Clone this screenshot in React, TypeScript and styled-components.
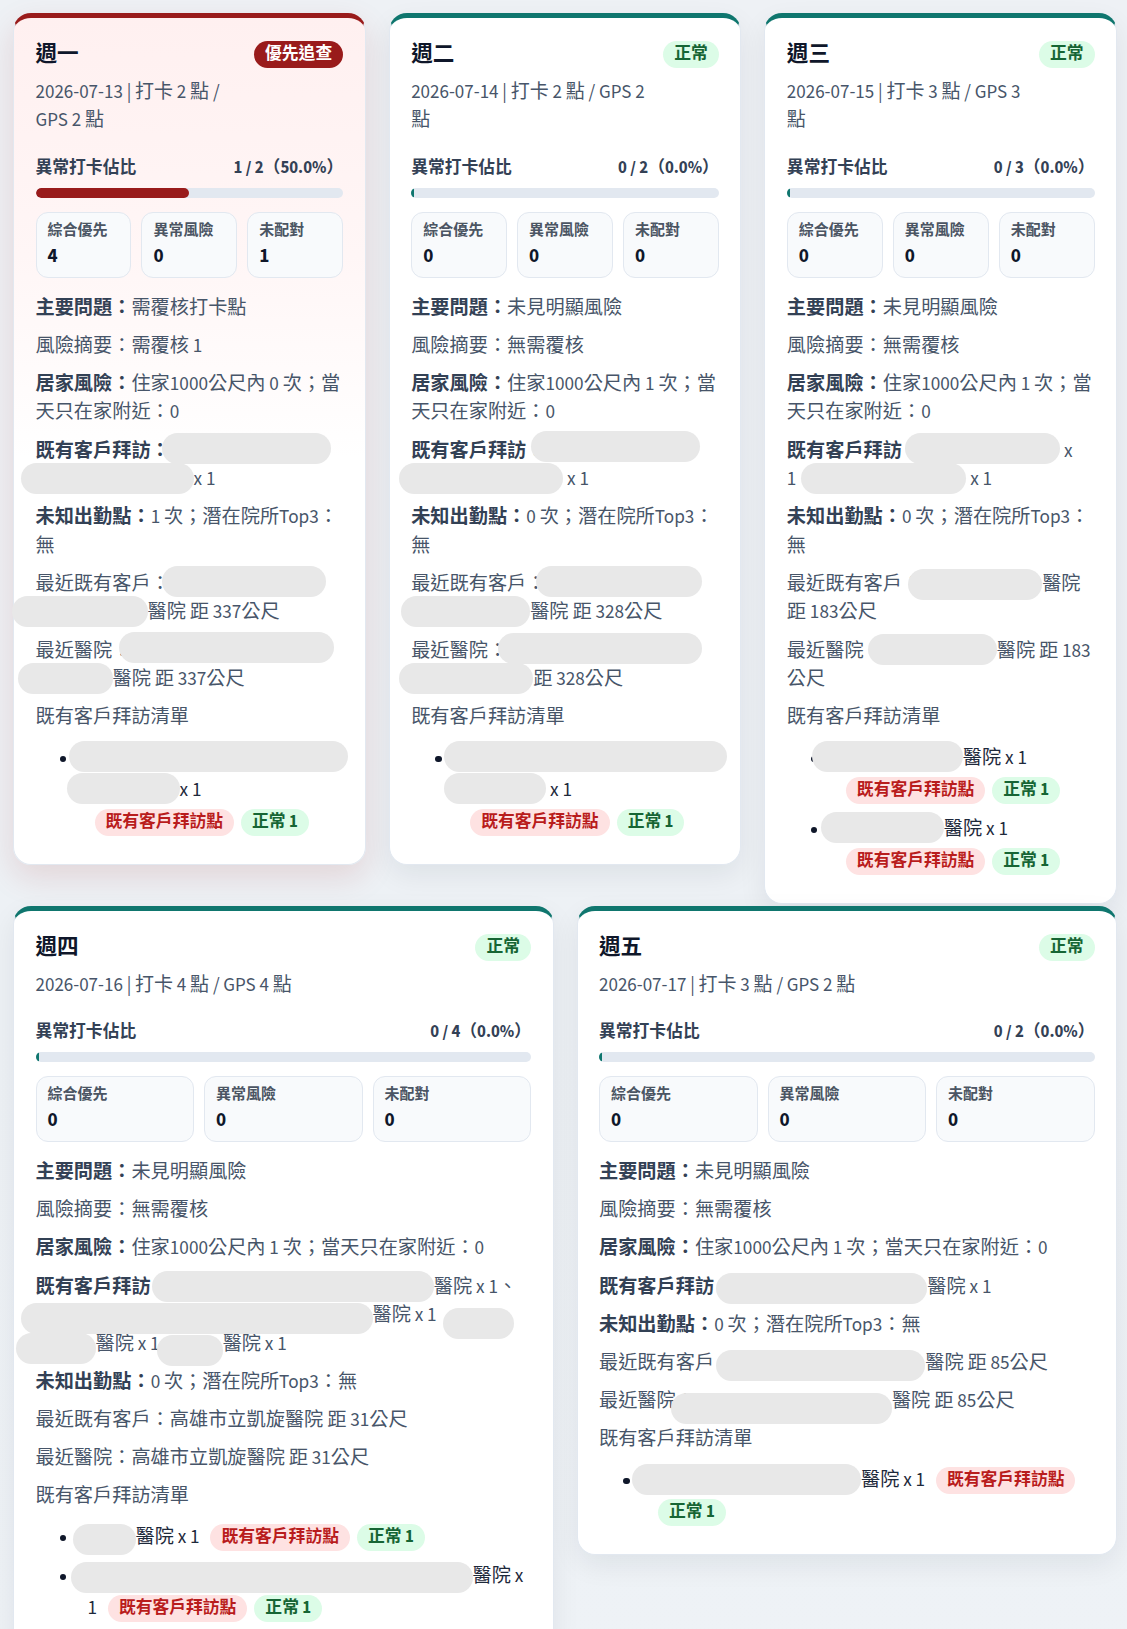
import React from "react";
import styled, { createGlobalStyle } from "styled-components";

type Tone = "alert" | "ok";

const GlobalStyle = createGlobalStyle`
  html, body { margin: 0; padding: 0; }
  body {
    font-family: "Source Sans 3", "Noto Sans CJK TC", "Noto Sans", sans-serif;
    background: linear-gradient(180deg, #eef1f5 0%, #edf1f5 60%, #eef2f6 100%);
    color: #0f172a;
  }
  *, *::before, *::after { box-sizing: border-box; }
`;

const Page = styled.main`
  display: flex;
  flex-wrap: wrap;
  align-items: flex-start;
  gap: 2px 23px;
  padding: 13px 10px 24px 13px;
`;

const Card = styled.section<{ $tone: Tone }>`
  flex: 1 1 320px;
  min-width: 0;
  background: ${(p) =>
    p.$tone === "alert"
      ? "linear-gradient(180deg, #fff0f0 0%, #fff6f6 28%, #ffffff 52%)"
      : "#ffffff"};
  border: 1px solid #e2e8f0;
  border-top: 5px solid ${(p) => (p.$tone === "alert" ? "#991b1b" : "#0f766e")};
  border-radius: 18px;
  padding: 23px 21.5px 26px;
  box-shadow: ${(p) =>
    p.$tone === "alert"
      ? "0 12px 32px rgba(153, 27, 27, 0.13)"
      : "0 10px 28px rgba(15, 23, 42, 0.07)"};
`;

const Header = styled.div`
  display: flex;
  justify-content: space-between;
  align-items: flex-start;
  gap: 12px;
`;

const TitleBlock = styled.div`
  flex: 1 1 auto;
  min-width: 0;
`;

const Title = styled.h3`
  margin: 0;
  font-size: 21.6px;
  line-height: 27px;
  font-weight: 700;
  color: #0f172a;
`;

const DateLine = styled.div`
  margin-top: 11px;
  font-size: 19px;
  line-height: 28px;
  color: #475569;
`;

const Badge = styled.span<{ $tone: Tone }>`
  flex-shrink: 0;
  white-space: nowrap;
  height: 27px;
  line-height: 27px;
  padding: 0 11px;
  border-radius: 999px;
  font-size: 16.8px;
  font-weight: 700;
  background: ${(p) => (p.$tone === "alert" ? "#991b1b" : "#dcfce7")};
  color: ${(p) => (p.$tone === "alert" ? "#ffffff" : "#166534")};
`;

const RatioRow = styled.div`
  margin-top: 20.5px;
  display: flex;
  justify-content: space-between;
  font-size: 16.8px;
  line-height: 24px;
  font-weight: 700;
  color: #334155;
`;

const Track = styled.div`
  margin-top: 8px;
  height: 10px;
  border-radius: 999px;
  background: #e2e8f0;
  overflow: hidden;
`;

const Fill = styled.div<{ $tone: Tone }>`
  height: 100%;
  min-width: 3px;
  border-radius: 999px;
  background: ${(p) => (p.$tone === "alert" ? "#991b1b" : "#0f766e")};
`;

const Stats = styled.div`
  margin-top: 14px;
  display: grid;
  grid-template-columns: repeat(3, 1fr);
  gap: 10px;
`;

const StatBox = styled.div`
  border: 1px solid #e2e8f0;
  background: #f8fafc;
  border-radius: 12px;
  padding: 9px 11px;
`;

const StatLabel = styled.div`
  font-size: 15px;
  line-height: 18px;
  font-weight: 600;
  color: #4b5563;
`;

const StatValue = styled.div`
  margin-top: 4px;
  font-size: 19.2px;
  line-height: 24px;
  font-weight: 700;
  color: #0f172a;
`;

const Body = styled.div`
  margin-top: 16px;
  display: flex;
  flex-direction: column;
  gap: 9.7px;
`;

const Para = styled.p`
  margin: 0;
  font-size: 19.2px;
  line-height: 28.5px;
  color: #475569;
`;

const B = styled.b`
  font-weight: 700;
  color: #334155;
`;

const List = styled.ul`
  margin: 0;
  padding: 0;
  list-style: none;
  display: flex;
  flex-direction: column;
  gap: 7px;
`;

const Item = styled.li`
  padding-left: 52px;
  text-indent: -28px;
  font-size: 19.2px;
  line-height: 32px;
  color: #1e293b;

  &::before {
    content: "";
    display: inline-block;
    width: 6.5px;
    height: 6.5px;
    margin-right: 2.5px;
    border-radius: 50%;
    background: #0f172a;
    vertical-align: middle;
    text-indent: 0;
  }
`;

const Tag = styled.span<{ $tone: "red" | "green" }>`
  display: inline-block;
  text-indent: 0;
  margin-left: 7px;
  height: 27px;
  line-height: 27px;
  padding: 0 11px;
  border-radius: 999px;
  font-size: 16.8px;
  font-weight: 700;
  vertical-align: middle;
  white-space: nowrap;
  background: ${(p) => (p.$tone === "red" ? "#fee2e2" : "#dcfce7")};
  color: ${(p) => (p.$tone === "red" ? "#b91c1c" : "#166534")};
`;

/* Redaction mask drawn over hidden text */
const Redact = styled.span<{ $w: number; $ml?: number; $mr?: number; $dy?: number }>`
  display: inline-block;
  position: relative;
  top: ${(p) => p.$dy ?? -2}px;
  width: ${(p) => p.$w}px;
  height: 31px;
  margin: -6px ${(p) => p.$mr ?? 0}px -6px ${(p) => p.$ml ?? 0}px;
  vertical-align: middle;
  border-radius: 999px;
  background: #e8e8e8;
  text-indent: 0;
`;

type DayProps = {
  tone: Tone;
  title: string;
  date: string;
  badge: string;
  ratio: string;
  pct: number;
  stats: [number, number, number];
  children: React.ReactNode;
};

const DayCard = ({ tone, title, date, badge, ratio, pct, stats, children }: DayProps) => (
  <Card $tone={tone}>
    <Header>
      <TitleBlock>
        <Title>{title}</Title>
        <DateLine>{date}</DateLine>
      </TitleBlock>
      <Badge $tone={tone}>{badge}</Badge>
    </Header>
    <RatioRow>
      <span>異常打卡佔比</span>
      <span>{ratio}</span>
    </RatioRow>
    <Track>
      <Fill $tone={tone} style={{ width: `${pct}%` }} />
    </Track>
    <Stats>
      {["綜合優先", "異常風險", "未配對"].map((label, i) => (
        <StatBox key={label}>
          <StatLabel>{label}</StatLabel>
          <StatValue>{stats[i]}</StatValue>
        </StatBox>
      ))}
    </Stats>
    <Body>{children}</Body>
  </Card>
);

const VisitTags = () => (
  <>
    <Tag $tone="red">既有客戶拜訪點</Tag>
    <Tag $tone="green">正常 1</Tag>
  </>
);

export default function App() {
  return (
    <>
      <GlobalStyle />
      <Page>
        <DayCard
          tone="alert"
          title="週一"
          date="2026-07-13 | 打卡 2 點 / GPS 2 點"
          badge="優先追查"
          ratio="1 / 2（50.0%）"
          pct={50}
          stats={[4, 0, 1]}
        >
          <Para><B>主要問題：</B>需覆核打卡點</Para>
          <Para>風險摘要：需覆核 1</Para>
          <Para><B>居家風險：</B>住家1000公尺內 0 次；當天只在家附近：0</Para>
          <Para>
            <B>既有客戶拜訪：</B>
            <Redact $w={169} $ml={-8} $mr={-20} $dy={-3} />
            <br />
            <Redact $w={173} $ml={-15} />x 1
          </Para>
          <Para><B>未知出勤點：</B>1 次；潛在院所Top3：無</Para>
          <Para>
            最近既有客戶：<Redact $w={164} $ml={-8} $mr={-20} $dy={-4} />
            <br />
            <Redact $w={136} $ml={-24} />醫院 距 337公尺
          </Para>
          <Para>
            最近醫院：<Redact $w={215} $ml={-12} $mr={-20} $dy={-4} />
            <br />
            <Redact $w={95} $ml={-18} />醫院 距 337公尺
          </Para>
          <Para>既有客戶拜訪清單</Para>
          <List>
            <Item>
              <Redact $w={279} $mr={-30} />
              <br />
              <Redact $w={113} $ml={-21} />x 1
              <br />
              <VisitTags />
            </Item>
          </List>
        </DayCard>

        <DayCard
          tone="ok"
          title="週二"
          date="2026-07-14 | 打卡 2 點 / GPS 2 點"
          badge="正常"
          ratio="0 / 2（0.0%）"
          pct={0}
          stats={[0, 0, 0]}
        >
          <Para><B>主要問題：</B>未見明顯風險</Para>
          <Para>風險摘要：無需覆核</Para>
          <Para><B>居家風險：</B>住家1000公尺內 1 次；當天只在家附近：0</Para>
          <Para>
            <B>既有客戶拜訪：</B>
            <Redact $w={169} $ml={-14} $mr={-20} $dy={-5} />
            <br />
            <Redact $w={164} $ml={-12} /> x 1
          </Para>
          <Para><B>未知出勤點：</B>0 次；潛在院所Top3：無</Para>
          <Para>
            最近既有客戶：<Redact $w={166} $ml={-9} $mr={-20} $dy={-4} />
            <br />
            <Redact $w={129} $ml={-10} />醫院 距 328公尺
          </Para>
          <Para>
            最近醫院：<Redact $w={204} $ml={-9} $mr={-20} $dy={-3} />
            <br />
            <Redact $w={134} $ml={-12} />距 328公尺
          </Para>
          <Para>既有客戶拜訪清單</Para>
          <List>
            <Item>
              <Redact $w={283} $mr={-30} />
              <br />
              <Redact $w={102} $ml={-19} /> x 1
              <br />
              <VisitTags />
            </Item>
          </List>
        </DayCard>

        <DayCard
          tone="ok"
          title="週三"
          date="2026-07-15 | 打卡 3 點 / GPS 3 點"
          badge="正常"
          ratio="0 / 3（0.0%）"
          pct={0}
          stats={[0, 0, 0]}
        >
          <Para><B>主要問題：</B>未見明顯風險</Para>
          <Para>風險摘要：無需覆核</Para>
          <Para><B>居家風險：</B>住家1000公尺內 1 次；當天只在家附近：0</Para>
          <Para>
            <B>既有客戶拜訪：</B>
            <Redact $w={155} $ml={-16} $dy={-3} /> x
            <br />
            1<Redact $w={165} $ml={5} /> x 1
          </Para>
          <Para><B>未知出勤點：</B>0 次；潛在院所Top3：無</Para>
          <Para>
            最近既有客戶：<Redact $w={134} $ml={-13} $dy={-1} />醫院
            <br />
            距 183公尺
          </Para>
          <Para>
            最近醫院：<Redact $w={129} $ml={-15} $dy={-2} />醫院 距 183
            <br />
            公尺
          </Para>
          <Para>既有客戶拜訪清單</Para>
          <List>
            <Item>
              <Redact $w={151} $ml={-8} />醫院 x 1
              <br />
              <VisitTags />
            </Item>
            <Item>
              <Redact $w={123} $ml={1} />醫院 x 1
              <br />
              <VisitTags />
            </Item>
          </List>
        </DayCard>

        <DayCard
          tone="ok"
          title="週四"
          date="2026-07-16 | 打卡 4 點 / GPS 4 點"
          badge="正常"
          ratio="0 / 4（0.0%）"
          pct={0}
          stats={[0, 0, 0]}
        >
          <Para><B>主要問題：</B>未見明顯風險</Para>
          <Para>風險摘要：無需覆核</Para>
          <Para><B>居家風險：</B>住家1000公尺內 1 次；當天只在家附近：0</Para>
          <Para>
            <B>既有客戶拜訪：</B>
            <Redact $w={282} $ml={-18} $dy={-1} />醫院 x 1、
            <br />
            <Redact $w={352} $ml={-15} $dy={2} />醫院 x 1
            <Redact $w={71} $ml={6} $mr={-30} $dy={7} />
            <br />
            <Redact $w={80} $ml={-20} $dy={4} />醫院 x 1
            <Redact $w={66} $ml={-3} $dy={6} />醫院 x 1
          </Para>
          <Para><B>未知出勤點：</B>0 次；潛在院所Top3：無</Para>
          <Para>最近既有客戶：高雄市立凱旋醫院 距 31公尺</Para>
          <Para>最近醫院：高雄市立凱旋醫院 距 31公尺</Para>
          <Para>既有客戶拜訪清單</Para>
          <List>
            <Item>
              <Redact $w={63} $ml={4} $dy={2} />醫院 x 1 <VisitTags />
            </Item>
            <Item>
              <Redact $w={402} $ml={2} $dy={1} />醫院 x
              <br />
              1 <VisitTags />
            </Item>
          </List>
        </DayCard>

        <DayCard
          tone="ok"
          title="週五"
          date="2026-07-17 | 打卡 3 點 / GPS 2 點"
          badge="正常"
          ratio="0 / 2（0.0%）"
          pct={0}
          stats={[0, 0, 0]}
        >
          <Para><B>主要問題：</B>未見明顯風險</Para>
          <Para>風險摘要：無需覆核</Para>
          <Para><B>居家風險：</B>住家1000公尺內 1 次；當天只在家附近：0</Para>
          <Para>
            <B>既有客戶拜訪：</B>
            <Redact $w={211} $ml={-17} $dy={1} />醫院 x 1
          </Para>
          <Para><B>未知出勤點：</B>0 次；潛在院所Top3：無</Para>
          <Para>
            最近既有客戶：<Redact $w={209} $ml={-17} $dy={1} />醫院 距 85公尺
          </Para>
          <Para>
            最近醫院：<Redact $w={221} $ml={-24} $dy={6} />醫院 距 85公尺
          </Para>
          <Para>既有客戶拜訪清單</Para>
          <List>
            <Item>
              <Redact $w={229} $dy={-1} />醫院 x 1 <VisitTags />
            </Item>
          </List>
        </DayCard>
      </Page>
    </>
  );
}
